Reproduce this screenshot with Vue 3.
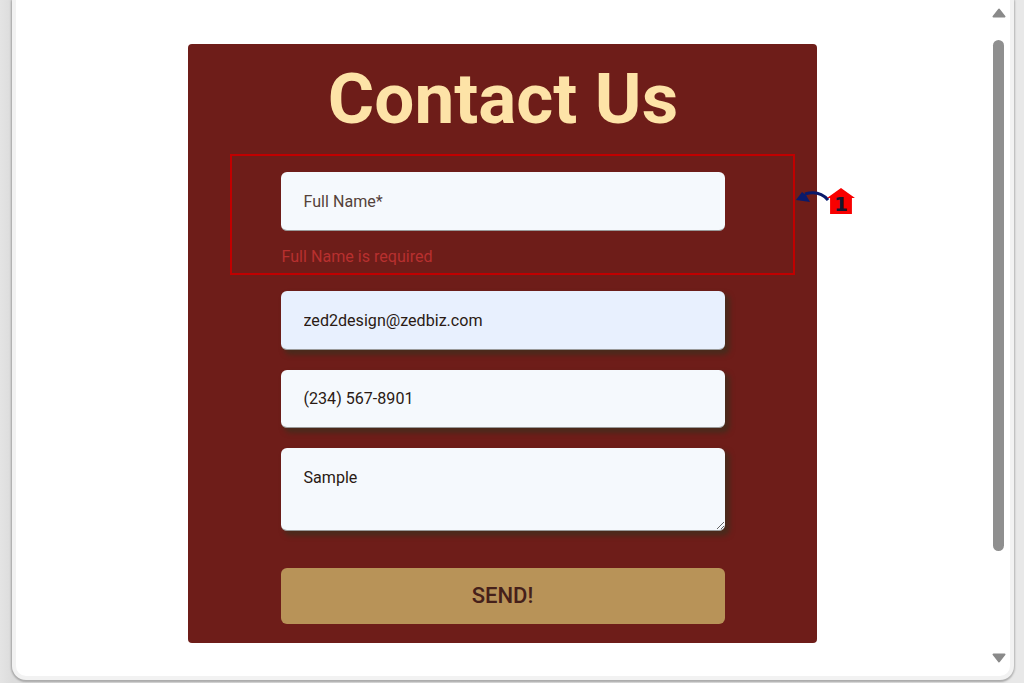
<template>
  <div class="frame">
    <div class="panel">
      <main class="content">
        <section class="card">
          <h1 class="title">Contact Us</h1>
          <form class="contact-form" @submit.prevent>
            <div class="field-name">
              <input v-model="form.name" class="field no-shadow" type="text" placeholder="Full Name*" />
              <p class="error">Full Name is required</p>
            </div>
            <input v-model="form.email" class="field autofilled" type="text" />
            <input v-model="form.phone" class="field phone" type="text" />
            <textarea v-model="form.message" class="field message"></textarea>
            <button class="send-btn" type="submit">SEND!</button>
          </form>

          <div class="highlight"></div>
          <div class="marker">
            <svg width="34" height="28" viewBox="0 0 34 28">
              <path d="M33 12 C28 6 20 3 10 6" fill="none" stroke="#0a1a6b" stroke-width="3" />
              <path d="M1 12 L7 4 L11 7 L15 14 Z" fill="#0a1a6b" />
            </svg>
            <span class="marker-badge">1</span>
          </div>
        </section>
      </main>
      <aside class="scrollbar">
        <svg class="arrow" width="14" height="10" viewBox="0 0 14 10">
          <path d="M7 1.5 L12.5 8.5 L1.5 8.5 Z" fill="#8a8a8a" stroke="#8a8a8a" stroke-width="2" stroke-linejoin="round" />
        </svg>
        <span class="thumb"></span>
        <svg class="arrow down" width="14" height="10" viewBox="0 0 14 10">
          <path d="M1.5 1.5 L12.5 1.5 L7 8.5 Z" fill="#8a8a8a" stroke="#8a8a8a" stroke-width="2" stroke-linejoin="round" />
        </svg>
      </aside>
    </div>
  </div>
</template>

<script setup>
import { reactive } from 'vue'

const form = reactive({
  name: '',
  email: 'zed2design@zedbiz.com',
  phone: '(234) 567-8901',
  message: 'Sample'
})
</script>

<style scoped>
.frame {
  width: 1024px;
  height: 683px;
  box-sizing: border-box;
  padding: 0 10px 3px 12px;
  background: linear-gradient(90deg, #e4e4e4, #dcdcdc 1.2%, #e8e8e8 98%);
  overflow: hidden;
}
.panel {
  display: flex;
  height: 100%;
  box-sizing: border-box;
  background: #fff;
  border: 4px solid #f2f2f2;
  border-top: none;
  border-radius: 0 0 14px 14px;
  box-shadow: -1px 0 2px #a8a8a8, 1px 0 2px #bcbcbc, 0 2px 2px #a8a8a8;
}
.content {
  flex: 1;
  padding-top: 44px;
  display: flex;
  justify-content: center;
  align-items: flex-start;
}
.card {
  position: relative;
  width: 629px;
  height: 599px;
  box-sizing: border-box;
  background: #6e1d19;
  border-radius: 4px;
  font-family: Roboto, sans-serif;
}
.title {
  margin: 0;
  padding: 16px 0 0 1px;
  height: 128px;
  box-sizing: border-box;
  text-align: center;
  font-size: 71px;
  line-height: 78px;
  font-weight: 700;
  color: #fde3a7;
}
.contact-form {
  width: 444px;
  margin: 0 auto;
  display: flex;
  flex-direction: column;
}
.field {
  display: block;
  width: 100%;
  box-sizing: border-box;
  border: none;
  border-bottom: 1px solid #9a9a9a;
  border-radius: 6px;
  background: #f5f9fd;
  padding: 0 23px;
  font-family: Roboto, sans-serif;
  font-size: 16.1px;
  color: #2a1a14;
  height: 59px;
  outline: none;
  box-shadow: 4px 4px 5px 1px #4a2a1c;
}
.field::placeholder {
  color: #54423a;
  opacity: 1;
}
.no-shadow {
  box-shadow: none;
}
.field-name {
  height: 119px;
}
.error {
  margin: 16px 0 0;
  padding-left: 1px;
  font-size: 16.1px;
  line-height: 20px;
  color: #b8302f;
}
.autofilled {
  background: #e8f0fe;
}
.phone {
  margin-top: 20px;
  height: 58px;
}
.message {
  margin-top: 20px;
  height: 83px;
  padding: 20px 23px 0;
  line-height: 19px;
  resize: vertical;
}
.send-btn {
  margin-top: 37px;
  height: 56px;
  padding: 0 0 2px;
  border: none;
  border-radius: 6px;
  background: #b89358;
  color: #45201a;
  font-family: Roboto, sans-serif;
  font-size: 22px;
  font-weight: 500;
  cursor: pointer;
}
.highlight {
  position: absolute;
  left: 42px;
  top: 110px;
  width: 565px;
  height: 121px;
  box-sizing: border-box;
  border: 2px solid #c00000;
  pointer-events: none;
}
.marker {
  position: absolute;
  left: 607px;
  top: 144px;
  width: 60px;
  height: 30px;
}
.marker svg {
  position: absolute;
  left: 0;
  top: 0;
}
.marker-badge {
  position: absolute;
  left: 32px;
  top: 0;
  width: 28px;
  height: 26px;
  box-sizing: border-box;
  padding-top: 6px;
  text-align: center;
  background: #f80000;
  clip-path: polygon(50% 0, 100% 38%, 89% 38%, 89% 100%, 11% 100%, 11% 38%, 0 38%);
  font-family: "DejaVu Sans", sans-serif;
  font-size: 20px;
  line-height: 20px;
  font-weight: 700;
  color: #16162e;
}
.scrollbar {
  width: 21px;
  display: flex;
  flex-direction: column;
  align-items: center;
  padding: 8px 2px 13px 0;
  box-sizing: border-box;
}
.thumb {
  width: 11px;
  height: 511px;
  margin-top: 22px;
  background: #8f8f8f;
  border-radius: 6px;
}
.arrow {
  display: block;
}
.arrow.down {
  margin-top: auto;
}
</style>
